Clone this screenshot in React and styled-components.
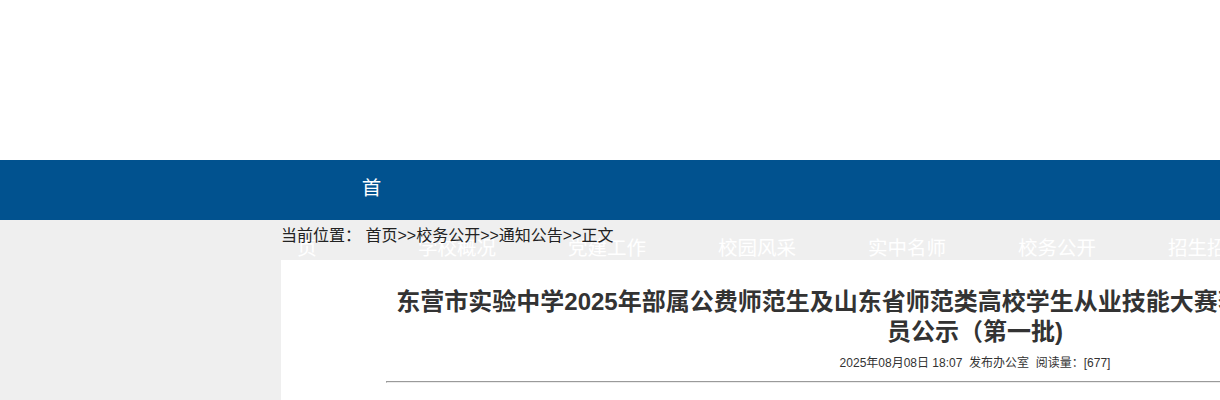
import { createGlobalStyle, styled } from "styled-components";

const GlobalStyle = createGlobalStyle`
  html, body {
    margin: 0;
    padding: 0;
    background: #efefef;
    overflow: hidden;
    font-family: "Liberation Sans", "Noto Sans CJK SC", sans-serif;
  }
`

const Header = styled.div`
  height: 160px;
  background: #fff;
`

const NavBar = styled.div`
  display: flow-root;
  height: 60px;
  background: #01528f;
`

const NavList = styled.ul`
  list-style: none;
  margin: -3px 0 0;
  padding: 0 0 0 232px;
  width: 1200px;
  white-space: nowrap;
  font-family: "Noto Sans CJK SC", sans-serif;
  font-size: 19.5px;
  line-height: 60px;
  color: #fff;
`

const NavItem = styled.li`
  display: inline-block;
  width: 150px;
  text-align: center;
  white-space: normal;
  text-indent: ${(props) => (props.indent ? props.indent : 0)}px;
  vertical-align: baseline;
`

const Breadcrumb = styled.div`
  margin-left: 281px;
  height: 32px;
  line-height: 32px;
  margin-bottom: 8px;
  font-size: 16px;
  color: #222;
  white-space: nowrap;
`

const Panel = styled.div`
  margin-left: 281px;
  width: 1178px;
  padding: 27px 105px 40px;
  background: #fff;
`

const Title = styled.h1`
  margin: 0;
  font-size: 24px;
  line-height: 30px;
  font-weight: bold;
  color: #333;
  text-align: center;
`

const Meta = styled.div`
  margin-top: 4px;
  line-height: 24px;
  font-size: 12px;
  color: #333;
  text-align: center;
`

const Divider = styled.hr`
  margin: 6px 0 8px;
  height: 0;
  border: 0;
  border-top: 1px solid #9a9a9a;
  border-left: 1px solid #9a9a9a;
  border-bottom: 1px solid #ececec;
`

const Content = styled.p`
  margin: 0;
  padding: 4px 0 0 26px;
  font-size: 16px;
  line-height: 28px;
  color: #d4d4d4;
`

const navs = ["学校概况", "党建工作", "校园风采", "实中名师", "校务公开", "招生招聘"]

const App = () => {
  return (
    <>
      <GlobalStyle />
      <Header />
      <NavBar>
        <NavList>
          <NavItem indent={129}>首页</NavItem>
          {navs.map((n) => (
            <NavItem key={n}>{n}</NavItem>
          ))}
        </NavList>
      </NavBar>
      <Breadcrumb>当前位置：&nbsp;首页&gt;&gt;校务公开&gt;&gt;通知公告&gt;&gt;正文</Breadcrumb>
      <Panel>
        <Title>
          东营市实验中学2025年部属公费师范生及山东省师范类高校学生从业技能大赛获奖者及优秀应届毕业生拟聘人员公示（第一批)
        </Title>
        <Meta>2025年08月08日 18:07&nbsp;&nbsp;发布办公室&nbsp;&nbsp;阅读量：[677]</Meta>
        <Divider />
        <Content>
          根据《东营市实验中学2025年部属公费师范生招聘简章》，经报名、资格审查、面试考核等程序，现将拟聘用人员名单予以公示。
        </Content>
      </Panel>
    </>
  )
}

export default App
